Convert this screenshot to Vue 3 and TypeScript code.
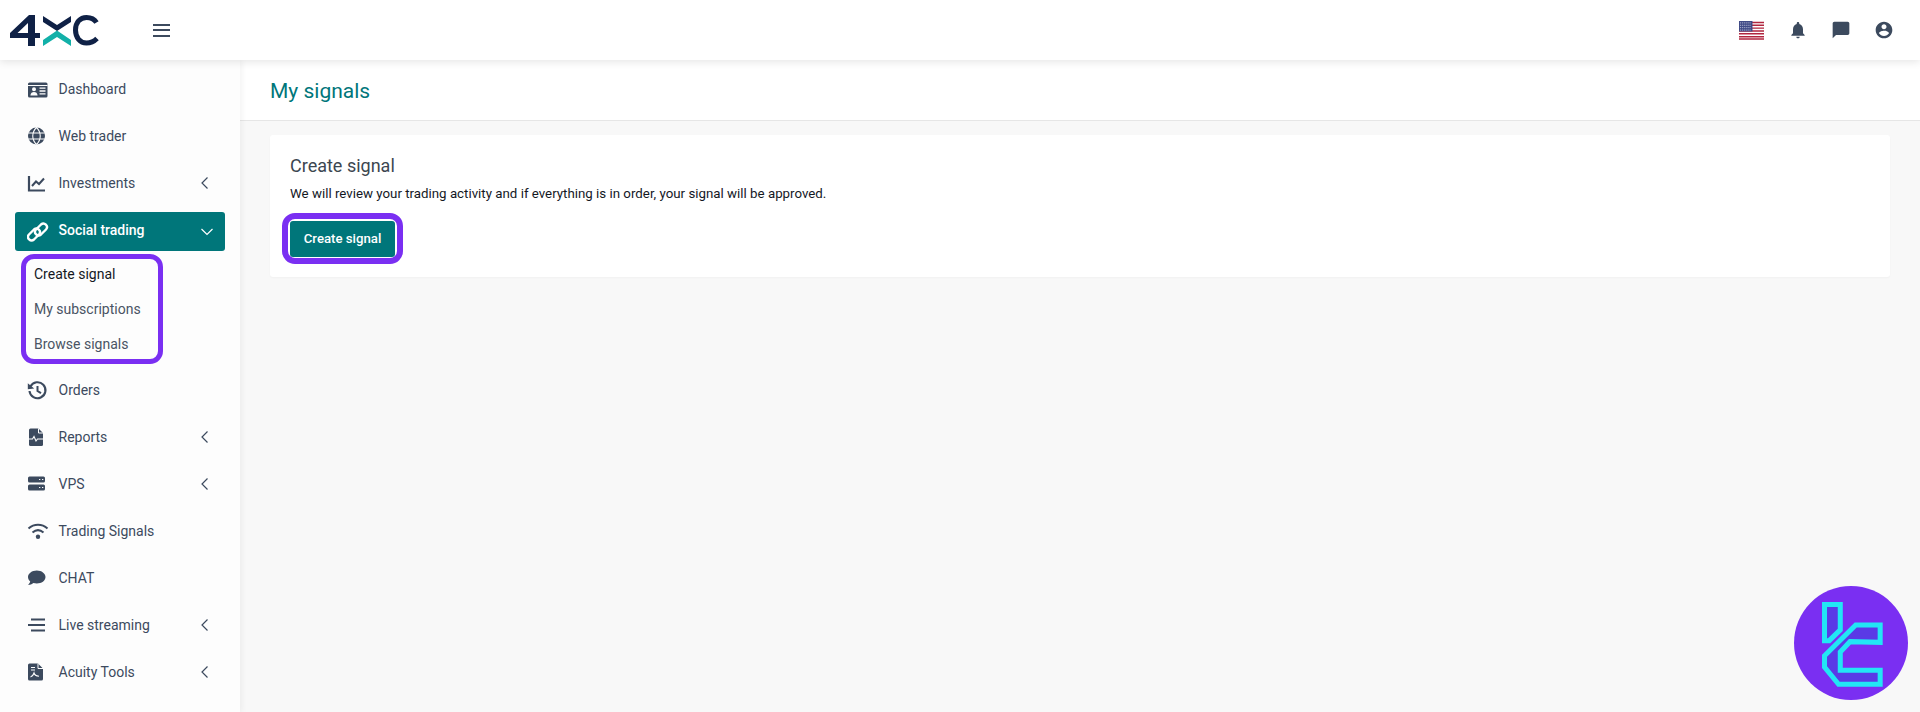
<script setup lang="ts">
interface Shape { d: string; fill?: string; stroke?: string; sw?: number }
interface NavItem { label: string; icon: Shape[]; arrow?: boolean; active?: boolean; children?: string[] }

const ink = '#3c4a5e'
const line = (d: string, sw = 2): Shape => ({ d, fill: 'none', stroke: 'currentColor', sw })
const solid = (d: string): Shape => ({ d, fill: 'currentColor' })
const cut = (d: string, sw = 1.2): Shape => ({ d, fill: 'none', stroke: '#fdfdfd', sw })

const items: NavItem[] = [
  { label: 'Dashboard', icon: [
    solid('M2.5 4.5h16.5a1.5 1.5 0 0 1 1.5 1.5v12a1.5 1.5 0 0 1-1.5 1.5H2.5a1.5 1.5 0 0 1-1.5-1.5V6a1.5 1.5 0 0 1 1.5-1.5z'),
    cut('M1 7.5h19.5', 1),
    { d: 'M7 9.2a2 2 0 1 1 0 4 2 2 0 0 1 0-4zM3.4 17.5c.2-2.4 1.7-3.5 3.6-3.5s3.4 1.1 3.6 3.5z', fill: '#fdfdfd' },
    cut('M12.5 10.2h6M12.5 13h6M12.5 15.8h6', 1.3)
  ] },
  { label: 'Web trader', icon: [
    solid('M9.5 2.5a8.5 8.5 0 1 1 0 17 8.5 8.5 0 0 1 0-17z'),
    cut('M1 8h17M1 14h17M9.5 2.5c-5 5-5 12 0 17M9.5 2.5c5 5 5 12 0 17', 1.1)
  ] },
  { label: 'Investments', arrow: true, icon: [
    line('M2 4v14.5h16', 2.2),
    line('M5 14l4-4.5 3 2.5 5-5.5', 2)
  ] },
  { label: 'Social trading', active: true, arrow: true, icon: [
    line('M7 8.500L2 13.500A3.540 3.540 0 0 0 7 18.500L12 13.500A3.540 3.540 0 0 0 7 8.500z', 2.4),
    line('M14 3.500L9 8.500A3.540 3.540 0 0 0 14 13.500L19 8.500A3.540 3.540 0 0 0 14 3.500z', 2.4)
  ], children: ['Create signal', 'My subscriptions', 'Browse signals'] },
  { label: 'Orders', icon: [
    line('M3.4 7.5a8 8 0 1 1-.9 4.5', 2.1),
    solid('M.8 4.2l6.4 5.2-6.4.9z'),
    line('M10.5 7v5l3.5 2.2', 2)
  ] },
  { label: 'Reports', arrow: true, icon: [
    solid('M3.5 2.5h8l4.5 4.5v11.5a1.5 1.5 0 0 1-1.5 1.5h-11A1.5 1.5 0 0 1 2 18.5V4a1.5 1.5 0 0 1 1.5-1.5z'),
    cut('M11.5 2.5V7H16', 1),
    cut('M2 13h3.5l1.5-2.5 2 4.5 1.5-2H16', 1.1)
  ] },
  { label: 'VPS', arrow: true, icon: [
    solid('M2.5 3.5h14a1.5 1.5 0 0 1 1.5 1.5v3a1.5 1.5 0 0 1-1.5 1.5h-14A1.5 1.5 0 0 1 1 8V5a1.5 1.5 0 0 1 1.5-1.5z'),
    solid('M2.5 11.5h14a1.5 1.5 0 0 1 1.5 1.5v3a1.5 1.5 0 0 1-1.5 1.5h-14A1.5 1.5 0 0 1 1 16v-3a1.5 1.5 0 0 1 1.5-1.5z'),
    cut('M12 6.5h1.3M15 6.5h1.3M12 14.5h1.3M15 14.5h1.3', 1.2)
  ] },
  { label: 'Trading Signals', icon: [
    line('M1.5 8.5c5.5-5 13.5-5 19 0', 2),
    line('M5.5 12.5c3.5-3 7.5-3 11 0', 2),
    solid('M11 14.5a2.2 2.2 0 1 1 0 4.4 2.2 2.2 0 0 1 0-4.4z')
  ] },
  { label: 'CHAT', icon: [
    solid('M9.8 3.5c4.8 0 8.7 2.9 8.7 6.6s-3.9 6.5-8.7 6.5c-1.2 0-2.4-.2-3.4-.5-1.4 1-3.2 2-5.4 2 1-.9 1.9-2.3 2.2-3.5C1.9 13.3 1 11.8 1 10.1 1 6.4 5 3.5 9.8 3.5z')
  ] },
  { label: 'Live streaming', arrow: true, icon: [
    line('M4 5.5h14M1 11h17M4 16.5h14', 2)
  ] },
  { label: 'Acuity Tools', arrow: true, icon: [
    solid('M2.5 2.5h8.5l5 5V18a1.5 1.5 0 0 1-1.5 1.5h-12A1.5 1.5 0 0 1 1 18V4a1.5 1.5 0 0 1 1.5-1.5z'),
    cut('M11 2.5v5h5', 1),
    cut('M4 6.5h4M4 9h4', 1.1),
    cut('M3.5 16c2-.5 3-2.5 3.5-4 .5 2 2 3 5 3.2', 1.1)
  ] }
]
</script>

<template>
  <div class="shell" :style="{ color: ink }">
    <header class="topbar">
      <svg class="logo" width="104" height="60" viewBox="0 0 104 60" aria-label="4XC">
        <path fill-rule="evenodd" d="M28 46V38H10V33L29 15H35V33H40V38H35V46zM28 33V23L17.500 33z" fill="#0f2146" />
        <path d="M43 16l14 9 14-9v6l-14 9-14-9z" fill="#0f2146" />
        <path d="M43 46v-6l14-9.500L71 40v6l-14-9z" fill="#12b0a8" />
        <path d="M96.500 22.500C94 18.500 90.500 17.500 86.500 17.500c-6.500 0-11 5-11 12.500s4.500 13 11 13c4 0 7.500-1.500 10.500-4.500" fill="none" stroke="#0f2146" stroke-width="5" />
      </svg>
      <button class="burger" aria-label="Menu"><span></span><span></span><span></span></button>
      <div class="top-icons">
        <svg class="flag" width="25" height="19" viewBox="0 0 26 20" preserveAspectRatio="none">
          <rect width="26" height="20" fill="#fff" />
          <path d="M0 1.500h26M0 4.500h26M0 7.500h26M0 10.500h26M0 13.500h26M0 16.500h26M0 19h26" stroke="#b1263f" stroke-width="1.500" />
          <rect width="14" height="11" fill="#3f4a86" />
          <path d="M1 2h12M1 4.500h12M1 7h12M1 9.500h12" stroke="#c5c9e0" stroke-width="1" stroke-dasharray="1 1" />
        </svg>
        <svg class="ti bell" width="20" height="20" viewBox="0 0 24 24"><path fill="currentColor" d="M12 22c1.100 0 2-.9 2-2h-4c0 1.100.9 2 2 2zm6-6v-5c0-3.070-1.630-5.640-4.500-6.320V4c0-.83-.67-1.500-1.500-1.500s-1.500.67-1.500 1.500v.68C7.640 5.360 6 7.920 6 11v5l-2 2v1h16v-1l-2-2z" /></svg>
        <svg class="ti chat" width="20" height="20" viewBox="0 0 24 24"><path fill="currentColor" d="M20 2H4c-1.100 0-2 .9-2 2v18l4-4h14c1.100 0 2-.9 2-2V4c0-1.100-.9-2-2-2z" /></svg>
        <svg class="ti acct" width="20" height="20" viewBox="0 0 24 24"><path fill="currentColor" d="M12 2C6.480 2 2 6.480 2 12s4.480 10 10 10 10-4.480 10-10S17.520 2 12 2zm0 3c1.660 0 3 1.340 3 3s-1.340 3-3 3-3-1.340-3-3 1.340-3 3-3zm0 14.200c-2.500 0-4.710-1.280-6-3.220.03-1.990 4-3.080 6-3.080 1.990 0 5.970 1.090 6 3.080-1.290 1.940-3.500 3.220-6 3.220z" /></svg>
      </div>
    </header>

    <div class="body">
      <aside class="sidebar">
        <template v-for="item in items" :key="item.label">
          <a class="nav" :class="{ active: item.active }">
            <svg class="nav-icon" width="22" height="22" viewBox="0 0 22 22">
              <path v-for="(s, i) in item.icon" :key="i" :d="s.d" :fill="s.fill" :stroke="s.stroke" :stroke-width="s.sw" />
            </svg>
            <span class="nav-label">{{ item.label }}</span>
            <svg v-if="item.active" class="chev down" width="14" height="10" viewBox="0 0 14 10"><path d="M1.500 2l5.500 5.500L12.500 2" fill="none" stroke="currentColor" stroke-width="1.200" /></svg>
            <svg v-else-if="item.arrow" class="chev" width="10" height="14" viewBox="0 0 10 14"><path d="M7.500 1.500L2 7l5.500 5.500" fill="none" stroke="currentColor" stroke-width="1.200" /></svg>
          </a>
          <div v-if="item.children" class="sub">
            <a v-for="(c, i) in item.children" :key="c" class="sub-item" :class="{ current: i === 0 }">{{ c }}</a>
          </div>
        </template>
      </aside>

      <main class="main">
        <div class="page-bar"><h1>My signals</h1></div>
        <section class="card">
          <h2>Create signal</h2>
          <p>We will review your trading activity and if everything is in order, your signal will be approved.</p>
          <div class="btn-ring"><button class="btn">Create signal</button></div>
        </section>
      </main>
    </div>

    <svg class="badge" width="114" height="114" viewBox="0 0 340 340" aria-label="TC">
      <circle cx="170" cy="170" r="170" fill="#7a2ff2" />
      <g fill="#5a3ae6" stroke="#22e6f5" stroke-width="15" stroke-linejoin="miter">
        <path d="M91 55h47v76l-33 32H91z" />
        <path d="M257 116h-73l-93 92v34l42 51h124v-42H138v-54l29-31 90 2z" />
      </g>
    </svg>
  </div>
</template>

<style>
html, body { margin: 0; }
</style>

<style scoped>
.shell {
  position: relative;
  height: 712px;
  overflow: hidden;
  background: #f8f8f8;
  font-family: Roboto, "Liberation Sans", sans-serif;
  font-size: 14px;
}
.topbar {
  position: relative;
  z-index: 2;
  display: flex;
  align-items: center;
  height: 60px;
  background: #fff;
  box-shadow: 0 2px 8px rgba(0, 0, 0, .1);
}
.logo { flex: none; }
.burger {
  display: flex;
  flex-direction: column;
  gap: 3.500px;
  width: 17px;
  margin: 0 0 0 49px;
  padding: 0;
  border: 0;
  background: none;
}
.burger span { display: block; height: 2px; background: #3c4a5e; }
.top-icons {
  display: flex;
  align-items: center;
  margin-left: auto;
  padding-right: 26px;
  gap: 23px;
}
.flag { margin-right: 1px; }
.sidebar {
  flex: none;
  display: flex;
  flex-direction: column;
  box-sizing: border-box;
  width: 240px;
  padding: 9px 15px 0;
  background: #fdfdfd;
  box-shadow: 2px 0 6px rgba(0, 0, 0, .05);
  position: relative;
  z-index: 1;
}
.body { display: flex; height: 652px; }
.nav {
  display: flex;
  align-items: center;
  flex: none;
  height: 39px;
  margin-bottom: 8px;
  padding: 0 15px 0 12px;
  border-radius: 3px;
  color: #3c4a5e;
}
.nav.active {
  margin-top: 2px;
  margin-bottom: 3px;
  background: #00767a;
  color: #fff;
  font-weight: 500;
}
.nav-icon { flex: none; }
.nav-label { margin-left: 9.500px; }
.nav.active .nav-label { margin-bottom: 3px; }
.chev { margin-left: auto; }
.chev.down { margin-right: -4px; }
.sub {
  flex: none;
  box-sizing: border-box;
  width: 142px;
  height: 110px;
  margin: 0 0 6px 6px;
  padding: 0 0 0 8px;
  border: 5px solid #7a2ff2;
  border-radius: 13px;
  display: flex;
  flex-direction: column;
  gap: 6px;
}
.sub-item {
  display: flex;
  align-items: center;
  flex: none;
  height: 29px;
  color: #4a5464;
}
.sub-item.current { color: #14181f; }
.main { flex: 1; min-width: 0; }
.page-bar {
  display: flex;
  align-items: center;
  box-sizing: border-box;
  height: 61px;
  padding: 2px 30px 0;
  background: #fff;
  border-bottom: 1px solid #e6e6e6;
}
h1 {
  margin: 0;
  font-size: 21px;
  font-weight: 400;
  color: #00767a;
}
.card {
  box-sizing: border-box;
  height: 142px;
  margin: 14px 30px 0;
  padding: 20px 20px 0;
  background: #fff;
  border-radius: 3px;
  box-shadow: 0 1px 2px rgba(0, 0, 0, .03);
}
h2 {
  margin: 0;
  font-size: 18px;
  line-height: 21px;
  font-weight: 400;
  color: #3c4650;
}
p {
  margin: 8px 0 0;
  font-size: 13.300px;
  line-height: 20px;
  color: #14181f;
}
.btn-ring {
  display: inline-block;
  margin: 9px 0 0 -8px;
  padding: 2px 2px 1px;
  background: #fff;
  border: 6px solid #7a2ff2;
  border-radius: 13px;
}
.btn {
  display: block;
  width: 105px;
  height: 36px;
  padding: 0 0 2px;
  border: 0;
  border-radius: 3px;
  background: #00767a;
  color: #fff;
  font: 500 13.200px Roboto, "Liberation Sans", sans-serif;
}
.badge {
  position: absolute;
  right: 12px;
  bottom: 12px;
  z-index: 3;
}
</style>
